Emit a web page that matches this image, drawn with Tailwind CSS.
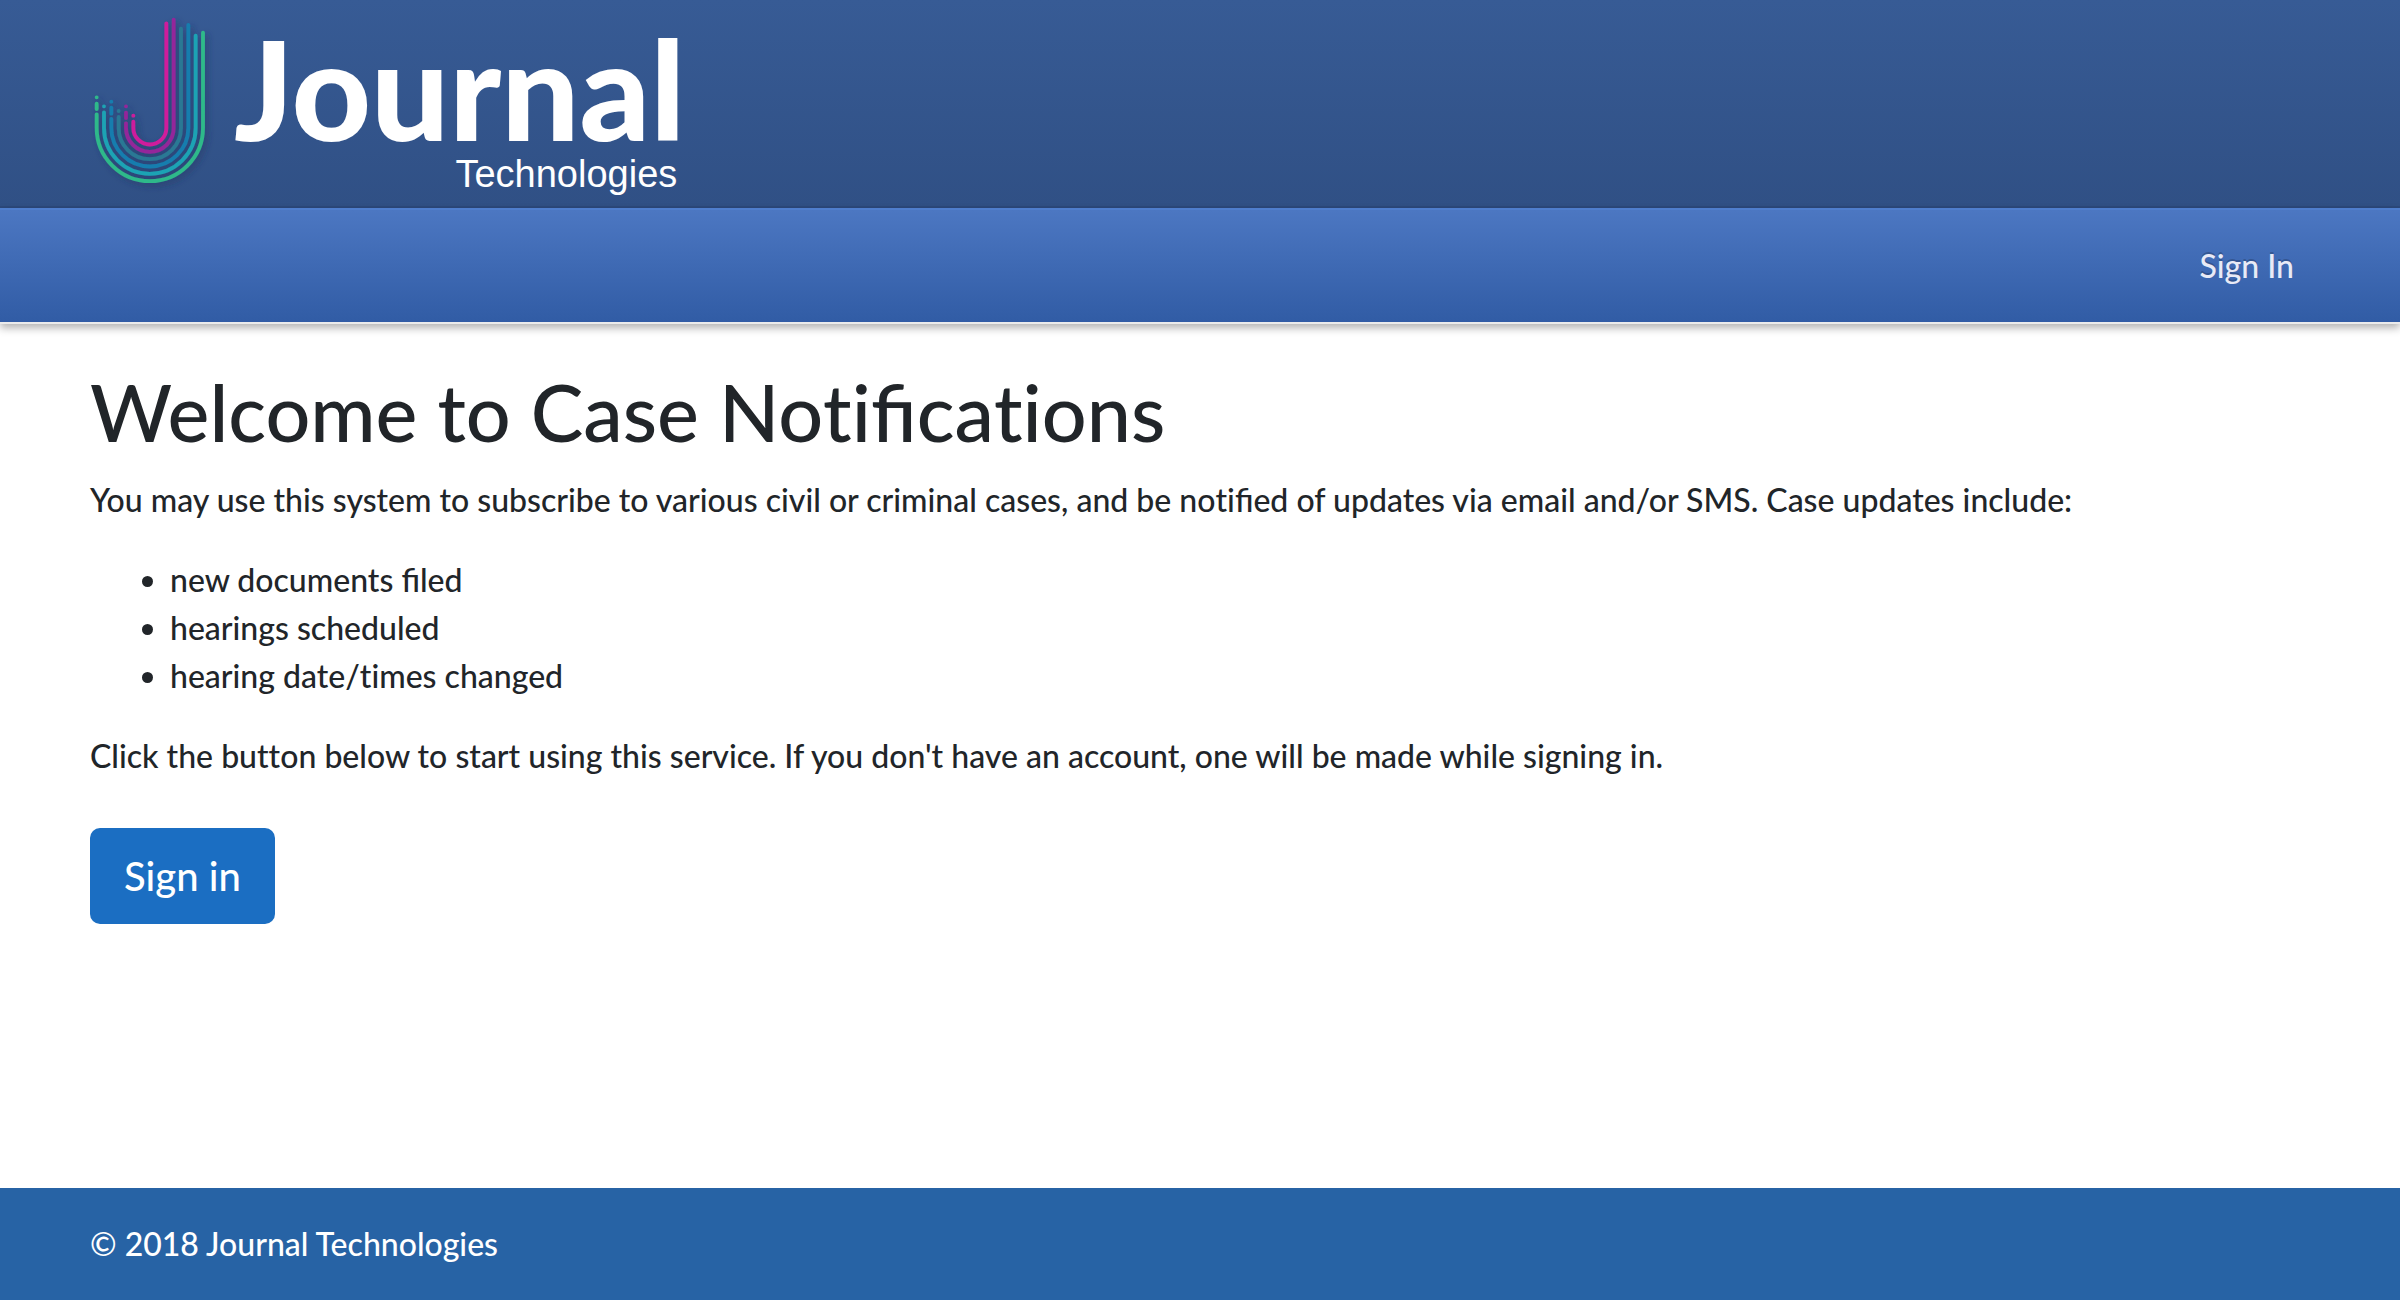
<!DOCTYPE html>
<html lang="en">
<head>
<meta charset="utf-8">
<meta name="viewport" content="width=device-width, initial-scale=1">
<title>Case Notifications</title>
<script src="https://cdn.jsdelivr.net/npm/@tailwindcss/browser@4"></script>
</head>
<body class="flex min-h-screen flex-col bg-white font-['Lato',sans-serif] text-[32px] leading-[48px] font-medium text-[#212529]">
  <header>
    <div class="h-52 border-b-2 border-[#2c497c] bg-linear-to-b from-[#375b95] to-[#305085] px-20">
      <a href="#" class="flex h-full w-fit gap-1 text-white" aria-label="Journal Technologies">
        <svg class="h-[200px] w-[150px] shrink-0" viewBox="0 0 450 600" fill="none" stroke-width="11.5" stroke-linecap="round" aria-hidden="true">
          <defs>
            <filter id="shade" x="-10%" y="-10%" width="130%" height="130%">
              <feDropShadow dx="9" dy="9" stdDeviation="9" flood-color="#1c2f58" flood-opacity=".55"/>
            </filter>
          </defs>
          <g filter="url(#shade)">
            <path stroke="#2fb98a" d="M369 98V384A159.500 159.500 0 0 1 50 384V343M50 327V311M50 292V292"/>
            <path stroke="#1ba3b4" d="M347 107V384A137.500 137.500 0 0 1 72 384V337M72 319V319"/>
            <path stroke="#147dae" d="M325 75V384A115.500 115.500 0 0 1 94 384V357M94 341V323M94 305V305"/>
            <path stroke="#297894" d="M303 86V384A93.500 93.500 0 0 1 116 384V351M116 333V333"/>
            <path stroke="#94259a" d="M281 59V384A71.500 71.500 0 0 1 138 384V370M138 354V338M138 319V319"/>
            <path stroke="#cf1b9c" d="M259 70V384A49.500 49.500 0 0 1 160 384V365M160 347V347"/>
          </g>
        </svg>
        <span class="flex flex-col items-end pt-5">
          <span class="text-[138px] leading-[136px] font-black">Journal</span>
          <span class="pr-2 font-['Liberation_Sans',sans-serif] text-[38px] leading-9 font-normal">Technologies</span>
        </span>
      </a>
    </div>
    <nav class="flex justify-end border-t-2 border-b-2 border-t-[#4f7ecd] border-b-[#ebebeb] bg-linear-to-b from-[#4c77c2] to-[#315ca5] px-[106px] py-8 shadow-[0_4px_8px_rgba(0,0,0,0.3)]">
      <a href="#" class="text-[#e8eaf6] text-shadow-[0_-2px_0_rgba(0,0,0,0.2)]">Sign In</a>
    </nav>
  </header>
  <main class="flex-1 px-[90px] py-10">
    <h1 class="mb-4 text-[79px] leading-24">Welcome to Case No<span class="[font-variant-ligatures:none]">ti</span>fica<span class="[font-variant-ligatures:none]">ti</span>ons</h1>
    <p class="mb-8">You may use this system to subscribe to various civil or criminal cases, and be no<span class="[font-variant-ligatures:none]">ti</span>fied of updates via email and/or SMS. Case updates include:</p>
    <ul class="mb-8 list-disc pl-20">
      <li>new documents filed</li>
      <li>hearings scheduled</li>
      <li>hearing date/<span class="[font-variant-ligatures:none]">ti</span>mes changed</li>
    </ul>
    <p class="mb-12">Click the bu<span class="[font-variant-ligatures:none]">tt</span>on below to start using this service. If you don't have an account, one will be made while signing in.</p>
    <button type="button" class="block rounded-[10px] bg-[#1b6ec2] px-[34px] py-4 text-[40px] leading-16 text-white">Sign in</button>
  </main>
  <footer class="bg-[#2763a5] px-[90px] py-8 text-white">© 2018 Journal Technologies</footer>
</body>
</html>
